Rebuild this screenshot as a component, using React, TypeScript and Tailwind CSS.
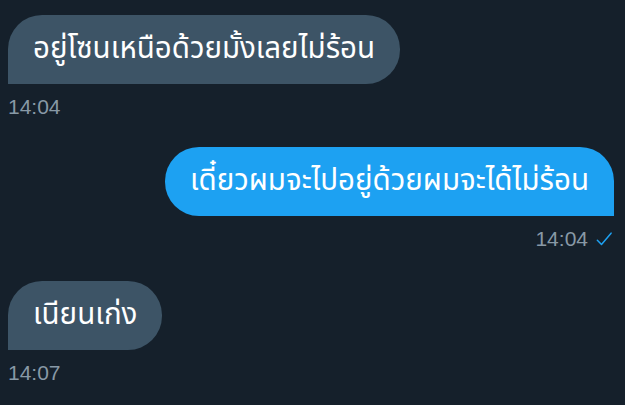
import React from "react";

type Msg = { text: string; time: string; mine: boolean; gap: string };

const messages: Msg[] = [
  { text: "อยู่โซนเหนือด้วยมั้งเลยไม่ร้อน", time: "14:04", mine: false, gap: "mt-[15px]" },
  { text: "เดี๋ยวผมจะไปอยู่ด้วยผมจะได้ไม่ร้อน", time: "14:04", mine: true, gap: "mt-[27px]" },
  { text: "เนียนเก่ง", time: "14:07", mine: false, gap: "mt-[29px]" },
];

const Check = () => (
  <svg width="20" height="20" viewBox="0 0 24 24" className="ml-[6px]">
    <path d="M4 13.5l5 5L20.5 5" fill="none" stroke="#1da1f2" strokeWidth="1.8" strokeLinecap="round" strokeLinejoin="round" />
  </svg>
);

export default function App() {
  return (
    <div
      className="w-[625px] h-[405px] overflow-hidden bg-[#15202b] px-[8px] flex flex-col"
      style={{ fontFamily: '"Noto Sans Thai", "Noto Sans", "DejaVu Sans", sans-serif' }}
    >
      {messages.map((m, i) => (
        <div key={i} className={`${m.gap} flex flex-col ${m.mine ? "items-end pr-[3px]" : "items-start"}`}>
          <div
            className={`h-[69px] flex items-center px-[25px] text-[29.5px] text-white rounded-[34px] ${
              m.mine ? "bg-[#1da1f2] rounded-br-none" : "bg-[#3d5466] rounded-bl-none"
            }`}
          >
            {m.text}
          </div>
          <div
            className="mt-[10px] flex items-center text-[21px] leading-[26px] text-[#8899a6]"
            style={{ fontFamily: '"Liberation Sans", Roboto, sans-serif' }}
          >
            {m.time}
            {m.mine && <Check />}
          </div>
        </div>
      ))}
    </div>
  );
}
